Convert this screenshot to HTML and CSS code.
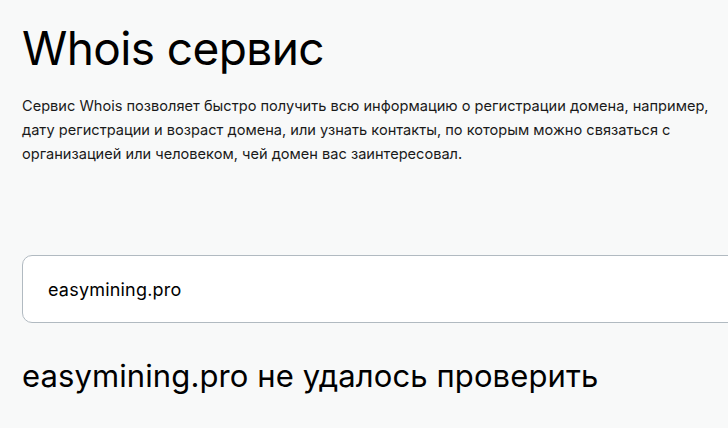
FILE: index.html
```html
<!DOCTYPE html>
<html lang="ru">
<head>
<meta charset="utf-8">
<link rel="stylesheet" href="styles.css">
</head>
<body>
<main class="page">
  <h1 class="title">Whois сервис</h1>
  <p class="lead">Сервис Whois позволяет быстро получить всю информацию о регистрации домена, например, дату регистрации и возраст домена, или узнать контакты, по которым можно связаться с организацией или человеком, чей домен вас заинтересовал.</p>
  <div class="search">
    <input class="search-input" type="text" value="easymining.pro">
  </div>
  <h2 class="result">easymining.pro не удалось проверить</h2>
</main>
</body>
</html>
```
FILE: styles.css
```css
html, body {
  margin: 0;
  padding: 0;
  background: #f8f9f9;
}
body {
  font-family: Inter, "Noto Sans", sans-serif;
  color: #000;
  overflow: hidden;
}
.page {
  padding: 20px 0 0 22px;
}
.title {
  margin: 0;
  font-size: 46px;
  font-weight: 400;
  line-height: 56px;
  letter-spacing: -0.6px;
}
.lead {
  margin: 18px 0 0;
  width: 700px;
  font-size: 14.6px;
  line-height: 24px;
  color: #1a1a1a;
}
.search {
  margin-top: 89px;
  width: 760px;
}
.search-input {
  display: block;
  box-sizing: border-box;
  width: 100%;
  height: 68px;
  border: 1px solid #b1bac1;
  border-radius: 10px;
  background: #fff;
  padding: 0 25px;
  font-family: Inter, "Noto Sans", sans-serif;
  font-size: 18px;
  letter-spacing: 0.2px;
  color: #000;
  outline: none;
}
.result {
  margin: 35px 0 0;
  font-size: 31px;
  font-weight: 400;
  line-height: 36px;
  letter-spacing: 0.1px;
}
```
